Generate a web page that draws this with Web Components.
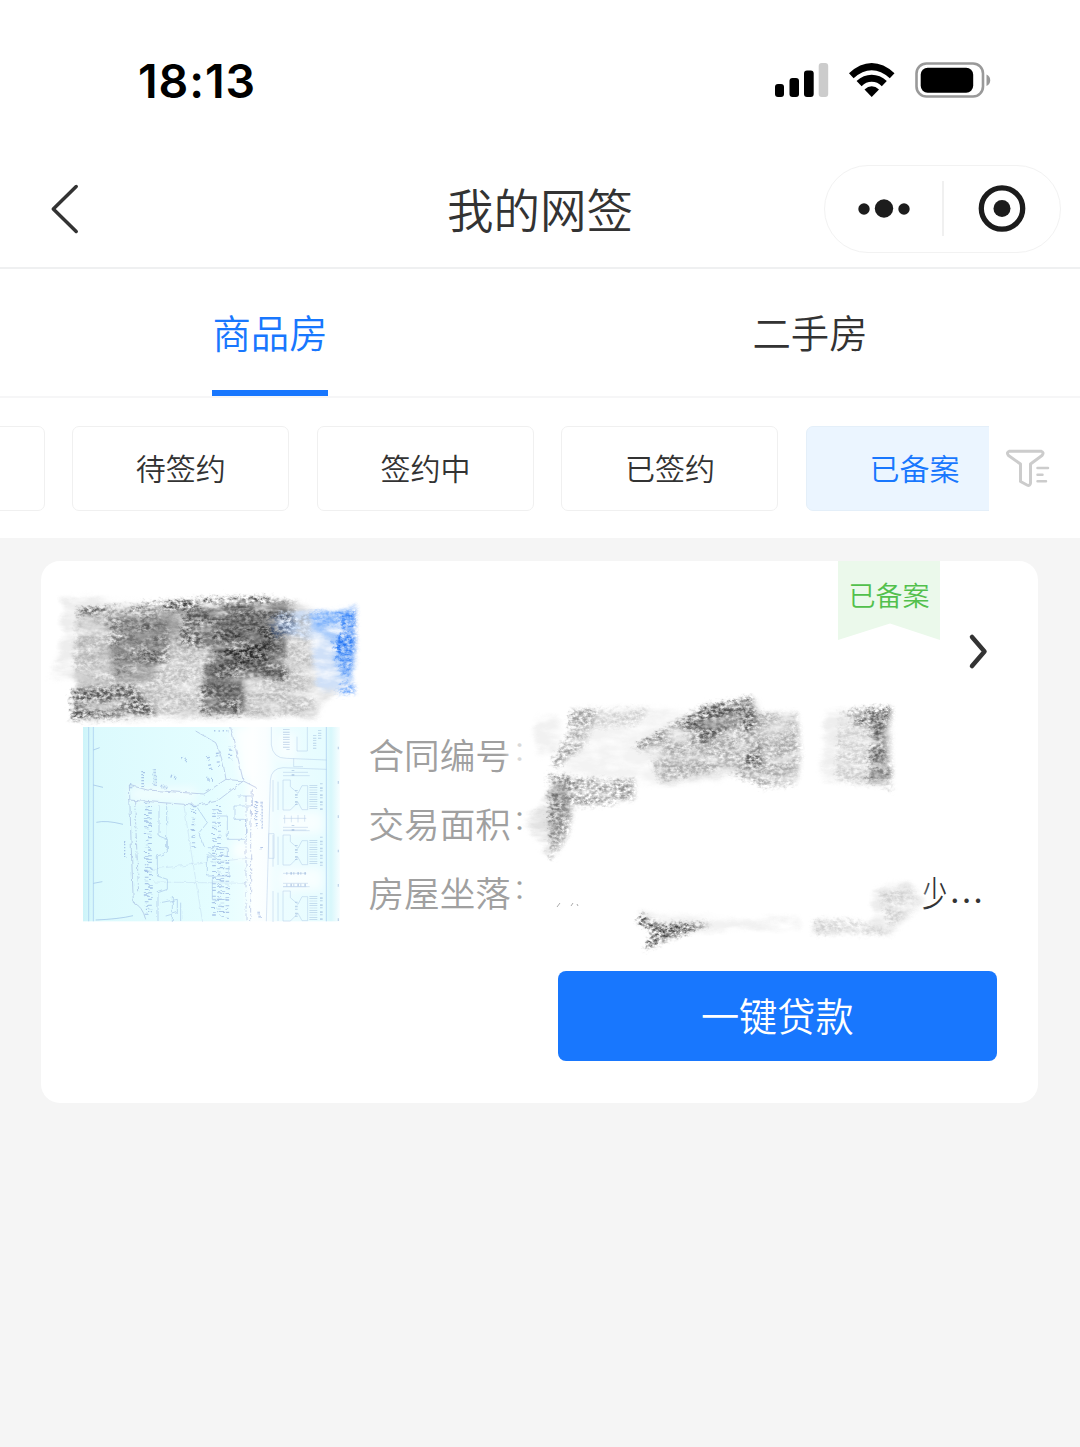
<!DOCTYPE html>
<html lang="zh-CN">
<head>
<meta charset="utf-8">
<title>我的网签</title>
<style>
    html, body { margin: 0; background: #f5f5f5; }
    body {
        width: 1080px;
        height: 1447px;
        overflow: hidden;
        font-family: "Noto Sans CJK SC", sans-serif;
        font-weight: 350;
        color: #333;
        --blue: #1877fe;
        --line: #eff0f1;
    }
</style>
</head>
<body>

<status-bar>18:13</status-bar>
<nav-bar>我的网签</nav-bar>
<tab-bar>
    <tab-item active>商品房</tab-item>
    <tab-item>二手房</tab-item>
</tab-bar>
<filter-bar>
    <filter-chip></filter-chip>
    <filter-chip>待签约</filter-chip>
    <filter-chip>签约中</filter-chip>
    <filter-chip>已签约</filter-chip>
    <filter-chip active>已备案</filter-chip>
</filter-bar>
<contract-card>
    <status-ribbon slot="status">已备案</status-ribbon>
    <plan-picture slot="picture"></plan-picture>
    <info-row>合同编号</info-row>
    <info-row>交易面积</info-row>
    <info-row>房屋坐落<span slot="value">少</span><span slot="more">...</span></info-row>
    <action-button slot="action">一键贷款</action-button>
    <chalk-marks slot="marks"></chalk-marks>
</contract-card>

<script>
const define = function (name, html) {
    const template = document.createElement('template');
    template.innerHTML = html;

    customElements.define(name, class extends HTMLElement {
        constructor () {
            super();
            this.attachShadow({ mode: 'open' });
            this.shadowRoot.appendChild(template.content.cloneNode(true));
        }
    });
};


define('status-bar', `
    <style>
        :host {
            display: flex;
            justify-content: space-between;
            align-items: center;
            box-sizing: border-box;
            height: 150px;
            padding: 10px 88px 0 138px;
            background: white;
            color: black;
        }
        .time { font: 600 46.500px/1 Inter, sans-serif; letter-spacing: .900px; margin-bottom: -2px; }
        svg { display: block; }
    </style>
    <div class="time"><slot></slot></div>
    <svg width="220" height="44" viewBox="772 58 220 44">
        <rect x="775" y="84" width="9" height="13" rx="3"/>
        <rect x="789.5" y="78" width="9.5" height="19" rx="3"/>
        <rect x="804" y="70.5" width="9.7" height="26.5" rx="3"/>
        <rect x="818.7" y="63" width="9.5" height="34" rx="3" fill="#ccc"/>
        <path d="M849 73.200Q860 63 871.700 63Q883.500 63 894.500 73.200L889.800 78.200Q881 70.200 871.700 70.200Q862.400 70.200 853.600 78.200Z"/>
        <path d="M856.600 81Q863.500 74.700 871.700 74.700Q880 74.700 886.800 81L881.800 86.200Q877.500 81.800 871.700 81.800Q866 81.800 861.600 86.200Z"/>
        <path d="M864.500 89.500Q868 86.200 871.700 86.200Q875.500 86.200 879 89.500L871.700 97Z"/>
        <rect x="916.500" y="63.500" width="66.500" height="33" rx="10" fill="white" stroke="#999" stroke-width="2.600"/>
        <rect x="920.700" y="67.700" width="52.500" height="25" rx="7"/>
        <path d="M986.500 74.500Q990.200 76 990.200 80.200Q990.200 84.400 986.500 86Z" fill="#999"/>
    </svg>
`);


define('nav-bar', `
    <style>
        :host {
            display: grid;
            grid-template-columns: 256px 1fr 237px;
            align-items: center;
            box-sizing: border-box;
            height: 119px;
            padding: 0 19px 0 20px;
            background: white;
            border-bottom: 2px solid var(--line);
        }
        .title { text-align: center; font-size: 46.5px; line-height: 1; margin: 0 0 0 -20px; }
        .capsule {
            display: grid;
            grid-template-columns: 1fr 2px 1fr;
            align-items: center;
            justify-items: center;
            box-sizing: border-box;
            height: 88px;
            border: 1px solid #f2f2f2;
            border-radius: 44px;
        }
        .divider { width: 2px; height: 55px; background: #f0f0f0; }
        svg { display: block; }
    </style>
    <svg width="60" height="60" viewBox="20 179 60 60" fill="none" stroke="#333" stroke-width="3.500" stroke-linecap="round" stroke-linejoin="round">
        <path d="M76.200 186.500L53.300 209L76.200 231.500"/>
    </svg>
    <div class="title"><slot></slot></div>
    <div class="capsule">
        <svg width="56" height="24" viewBox="-1 .500 56 24" fill="#1c1c1c">
            <circle cx="8" cy="12.500" r="5.700"/>
            <circle cx="28" cy="12" r="9.200"/>
            <circle cx="48" cy="12.500" r="5.700"/>
        </svg>
        <div class="divider"></div>
        <svg width="50" height="50" viewBox="0 .500 50 50">
            <circle cx="25" cy="25" r="20.700" fill="none" stroke="#1c1c1c" stroke-width="5.300"/>
            <circle cx="25" cy="25" r="8.500" fill="#1c1c1c"/>
        </svg>
    </div>
`);


define('tab-bar', `
    <style>
        :host {
            display: grid;
            grid-template-columns: 1fr 1fr;
            box-sizing: border-box;
            height: 129px;
            background: white;
            border-bottom: 2px solid #f6f6f7;
        }
    </style>
    <slot></slot>
`);


define('tab-item', `
    <style>
        :host { display: flex; justify-content: center; }
        div {
            box-sizing: border-box;
            height: 127px;
            font-size: 38.4px;
            line-height: 125px;
            border-bottom: 6px solid transparent;
        }
        :host([active]) div { color: var(--blue); border-color: var(--blue); }
    </style>
    <div><slot></slot></div>
`);


define('filter-bar', `
    <style>
        :host {
            display: grid;
            grid-template-columns: 989px 1fr;
            align-items: center;
            height: 140px;
            background: white;
        }
        .scroller { display: flex; gap: 27.600px; overflow: hidden; }
        /* scrolled so that the last chip is nearly in view */
        ::slotted(:first-child) { margin-left: -172.300px; }
        svg { display: block; margin-left: 16px; }
    </style>
    <div class="scroller"><slot></slot></div>
    <svg width="46" height="42" viewBox="1005 447 46 42" fill="none" stroke="#ccc" stroke-width="3" stroke-linecap="round" stroke-linejoin="round">
        <path d="M1009.500 451.200H1041Q1044.500 452.500 1042 455.500L1030.500 464V483Q1030 486.500 1027 485L1020.500 481.500V464L1008.500 455.500Q1006 452.500 1009.500 451.200Z"/>
        <path d="M1037.500 468H1048M1037.500 474.700H1042.500M1037.500 481.300H1046" stroke-width="2.500"/>
    </svg>
`);


define('filter-chip', `
    <style>
        :host {
            display: block;
            flex: none;
            box-sizing: border-box;
            width: 217px;
            height: 85px;
            border: 1px solid #f0f0f0;
            border-radius: 7px;
            text-align: center;
            font-size: 30px;
            line-height: 81px;
        }
        :host([active]) { color: var(--blue); background: #ebf5ff; border-color: #e4eff9; }
    </style>
    <slot></slot>
`);


define('contract-card', `
    <style>
        :host {
            display: block;
            position: relative;
            box-sizing: border-box;
            width: 997px;
            height: 542px;
            margin: 23px 0 0 41px;
            padding: 0 41px 0 42px;
            background: white;
            border-radius: 19px;
        }
        .head { display: flex; justify-content: flex-end; gap: 28px; height: 166px; }
        .head svg { display: block; margin: 72px 9px 0 0; }
        .body { display: grid; grid-template-columns: 257px 1fr; gap: 28.500px; height: 194.500px; }
        .rows { margin-top: -8px; }
        .foot { display: flex; justify-content: flex-end; padding-top: 49px; }
        ::slotted(chalk-marks) { position: absolute; inset: 0; pointer-events: none; }
    </style>
    <div class="head">
        <slot name="status"></slot>
        <svg width="20" height="38" viewBox="968 633 20 38" fill="none" stroke="#333" stroke-width="4.500" stroke-linecap="round" stroke-linejoin="round">
            <path d="M972 637L984.500 651.500L972 666"/>
        </svg>
    </div>
    <div class="body">
        <slot name="picture"></slot>
        <div class="rows"><slot></slot></div>
    </div>
    <div class="foot"><slot name="action"></slot></div>
    <slot name="marks"></slot>
`);


define('status-ribbon', `
    <style>
        :host {
            display: block;
            width: 102px;
            height: 79px;
            background: #ebf9eb;
            color: #52c04c;
            clip-path: polygon(0 0, 100% 0, 100% 100%, 51% 79%, 0 100%);
            font-size: 27px;
            line-height: 68px;
            text-align: center;
        }
    </style>
    <slot></slot>
`);


define('info-row', `
    <style>
        :host { display: flex; height: 69px; line-height: 69px; font-size: 35.600px; color: #a0a0a0; }
        .colon { font-size: 27px; margin: -4px 0 0 2px; }
        .value { margin-left: auto; color: #333; display: flex; }
        ::slotted([slot=value]) { display: block; transform: scaleX(.7); margin-right: -3px; }
        ::slotted([slot=more]) { display: block; letter-spacing: 2.100px; margin: -4px 12px 0 0; }
    </style>
    <div><slot></slot></div>
    <div class="colon">：</div>
    <div class="value"><slot name="value"></slot><slot name="more"></slot></div>
`);


define('action-button', `
    <style>
        :host {
            display: block;
            width: 439.500px;
            height: 90.500px;
            border-radius: 8px;
            background: var(--blue);
            color: white;
            font-size: 38.200px;
            line-height: 87px;
            text-align: center;
        }
    </style>
    <slot></slot>
`);


// site plan thumbnail, drawn at 3x
define('plan-picture', `
    <style>
        :host { display: block; }
        svg { display: block; }
    </style>
    <svg width="257" height="195" viewBox="40 36 771 585" fill="none">
        <defs>
            <linearGradient id="wash">
                <stop offset="0" stop-color="#cdf4f9"/>
                <stop offset=".05" stop-color="#dcfafd"/>
                <stop offset=".5" stop-color="#e4fdff"/>
                <stop offset=".62" stop-color="#ecfeff"/>
                <stop offset=".66" stop-color="#fcffff"/>
                <stop offset=".71" stop-color="#fafeff"/>
                <stop offset=".76" stop-color="#edfdff"/>
                <stop offset=".94" stop-color="#e6fcff"/>
                <stop offset=".965" stop-color="#d8f7fb"/>
                <stop offset="1" stop-color="#f8feff"/>
            </linearGradient>
            <filter id="soft"><feGaussianBlur stdDeviation="14"/></filter>
            <filter id="rough" x="0" y="0" width="100%" height="100%">
                <feTurbulence type="fractalNoise" baseFrequency=".06" numOctaves="2" seed="4"/>
                <feDisplacementMap in="SourceGraphic" scale="12"/>
            </filter>
        </defs>
        <rect x="40" y="34" width="771" height="585" fill="url(#wash)"/>
        <g filter="url(#soft)" fill="#fff">
            <path d="M490 34H555V190L515 190Z" opacity=".8"/>
            <rect x="620" y="55" width="60" height="80" opacity=".6"/>
            <rect x="630" y="290" width="130" height="65" opacity=".7"/>
            <rect x="630" y="460" width="130" height="65" opacity=".7"/>
            <rect x="490" y="380" width="50" height="50" opacity=".8"/>
            <rect x="180" y="215" width="200" height="45" opacity=".5"/>
        </g>
        <g stroke="#83a9dd" stroke-width="2" opacity=".75">
            <path d="M57 34V619M71 34V619M770 34V619" stroke="#91b9e8"/>
            <path d="M71 105L90 98M71 210L100 217M71 505L98 500M80 322Q110 315 160 328M78 615Q150 612 190 602"/>
        </g>
        <g stroke="#8393cf" stroke-width="1.800" opacity=".7" transform="translate(3 3)" filter="url(#rough)">
            <path d="M176 207L230 222L400 234L466 190L518 195L557 215"/>
            <path d="M174 252L380 268L440 255L518 195L480 34M466 190Q455 120 435 80L375 45"/>
            <path d="M176 207L182 400L188 560Q215 570 225 610" />
            <path d="M192 255L204 530M545 220L540 350V619M526 240V610" stroke-dasharray="18 5 4 5"/>
            <path d="M340 270L362 410L396 619M240 460L545 425M250 498L540 502" opacity=".4"/>
        </g>
        <g stroke="#6f8fd2" opacity=".5" transform="translate(3 3)" filter="url(#rough)">
            <path d="M228 260V600M238 270V590M368 268V395M430 280V610M445 270V600M470 420V610M455 400V600" stroke-width="11" stroke-dasharray="3 9 2 5 4 14"/>
            <path d="M265 268V360L290 370V410L260 420V480L290 490V520L262 530V615M288 262V400M380 275L410 320L385 350L400 390M410 395H470V420H410V480H475V450M425 490V550H470M500 240H545V270H490V310H525V370H470V300H440M415 410L440 430M270 560L320 550V590L285 600M305 540V619M330 560V615" stroke-width="2"/>
            <path d="M216 165V215M252 160V210M160 375V425M556 255V340M576 260V340M570 390V400M567 590V605M181 205V218M270 210L290 216" stroke-width="8" stroke-dasharray="3 2 1 3"/>
            <path d="M430 42H480M410 120L420 160M440 110L445 160M480 90V130M335 125L350 135M300 180L315 185M410 190H430" stroke-width="9" stroke-dasharray="4 7 3 12"/>
        </g>
        <g stroke="#88a9d8" stroke-width="1.600" opacity=".55">
            <path d="M605 34V90Q610 130 650 130L770 135M590 619L602 195Q605 160 640 158L770 163M713 34V108H682V65M672 130V155H700"/>
            <path id="block" d="M640 195H662V215L685 235L697 212H714V284H697L685 262L662 285H640ZM610 195V290M625 200V285M640 172H715M640 182H720"/>
            <use href="#block" y="165"/>
            <use href="#block" y="333"/>
            <path d="M597 356H613V430H597ZM645 300V325M665 302V322M685 300V322M705 300V320M640 310H710M640 345H710M640 475H710M640 515H710"/>
        </g>
        <g stroke="#7e9fce" opacity=".42">
            <path d="M655 42V105M645 42V102M735 60V105M750 45V75" stroke-width="10" stroke-dasharray="2 6 3 4"/>
            <path d="M725 210V285M737 210V285M725 375V452M737 375V452M725 543V615M737 543V615" stroke-width="12" stroke-dasharray="2 5"/>
            <path d="M755 205V285M755 365V452M755 535V615M680 225V275M670 165V185M680 390V440M670 330V350M650 475H710M650 510H710M680 560V605" stroke-width="8" stroke-dasharray="3 9 5 4"/>
            <path d="M806 95V619" stroke-width="4" stroke-dasharray="8 95"/>
        </g>
    </svg>
`);


// chalk scribbles over the private values
define('chalk-marks', `
    <style>
        :host { display: block; }
        svg { display: block; width: 997px; height: 542px; }
    </style>
    <svg viewBox="41 561 997 542" preserveAspectRatio="none">
        <defs>
            <filter id="grain" filterUnits="userSpaceOnUse" x="41" y="561" width="997" height="542" color-interpolation-filters="sRGB">
                <feTurbulence type="fractalNoise" baseFrequency=".24 .34" numOctaves="3" seed="8" result="noise"/>
                <feTurbulence type="fractalNoise" baseFrequency=".03 .08" numOctaves="3" seed="21" result="patches"/>
                <feGaussianBlur in="SourceGraphic" stdDeviation="2" result="blur"/>
                <feDisplacementMap in="blur" in2="noise" scale="9" xChannelSelector="R" yChannelSelector="G" result="edge"/>
                <feColorMatrix in="noise" values="0 0 0 0 0  0 0 0 0 0  0 0 0 0 0  2.400 0 0 0 -.650" result="mask"/>
                <feColorMatrix in="patches" values="0 0 0 0 0  0 0 0 0 0  0 0 0 0 0  2.600 0 0 0 -.450" result="mask2"/>
                <feComposite in="edge" in2="mask" operator="in" result="grained"/>
                <feComposite in="grained" in2="mask2" operator="in"/>
            </filter>
            <filter id="smear" filterUnits="userSpaceOnUse" x="41" y="561" width="997" height="542" color-interpolation-filters="sRGB">
                <feTurbulence type="fractalNoise" baseFrequency=".04 .1" numOctaves="4" seed="3" result="noise"/>
                <feGaussianBlur in="SourceGraphic" stdDeviation="2.500" result="blur"/>
                <feDisplacementMap in="blur" in2="noise" scale="10" xChannelSelector="R" yChannelSelector="G" result="edge"/>
                <feColorMatrix in="noise" values="0 0 0 0 0  0 0 0 0 0  0 0 0 0 0  2 0 0 0 -.200" result="mask"/>
                <feComposite in="edge" in2="mask" operator="in"/>
            </filter>
            <filter id="fade" x="-30%" y="-30%" width="160%" height="160%"><feGaussianBlur stdDeviation="3"/></filter>
        </defs>

        <g filter="url(#fade)" fill="#fff">
            <ellipse cx="522" cy="755" rx="15" ry="26" opacity=".6"/>
            <path d="M912 870H922L925 880L920 908H910Z"/>
        </g>

        <g filter="url(#smear)">
            <path d="M62 598L100 597L160 612L150 690L50 678L62 650Z" fill="#ededed"/>
            <path d="M78 612L296 602L318 612V716L74 718Z" fill="#d4d4d4"/>
            <path d="M108 620L165 610V665L150 680H115Z" fill="#a0a0a0"/>
            <path d="M165 612L205 606V640H165Z" fill="#aaa"/>
            <path d="M204 606L290 602L284 678H244V712H205Z" fill="#8b8b8b"/>
            <path d="M162 650H205V714H150V690Z" fill="#e4e4e4"/>
            <path d="M288 634L335 640L345 685L315 712H250V682H282Z" fill="#e2e2e2"/>
            <path d="M276 614L320 610L352 615V690L318 690L310 640L278 630Z" fill="#cfe0f8"/>
            <path d="M310 614L354 608L354 680H340L332 640L312 630Z" fill="#a8cbfb"/>
            <path d="M573 712L650 708L700 712V785L650 785L560 772Z" fill="#f3f3f3"/>
            <path d="M645 745L705 708L755 700L760 712L796 714L798 782L735 775L665 785Z" fill="#e4e4e4"/>
            <path d="M690 722L745 702L752 715L706 742Z" fill="#b4b4b4"/>
            <path d="M825 712H888V786L822 778Z" fill="#eee"/>
            <path d="M872 715H888V784H872Z" fill="#bbb"/>
            <path d="M526 822L550 788H565L563 840L547 856Z" fill="#e2e2e2"/>
            <path d="M551 782L570 782V815L551 840Z" fill="#c4c4c4"/>
            <path d="M640 912L720 920L800 918V930L700 930L660 934Z" fill="#f1f1f1"/>
            <path d="M815 920L870 923L875 888L910 882L926 902L890 934L815 934Z" fill="#ececec"/>
            <path d="M535 718H560V752L538 757Z" fill="#f1f1f1"/>
        </g>

        <g filter="url(#grain)">
            <path d="M78 610L268 599L298 604L294 622L310 612L316 714L74 720L80 686L74 660Z" fill="#888" opacity=".45"/>
            <path d="M78 609L135 605L180 600L268 597V605L180 609L80 614Z" fill="#444"/>
            <path d="M186 608L268 598L298 603L284 640L290 680H205L215 650L180 643Z" fill="#444" opacity=".8"/>
            <path d="M212 628H274V658L218 668Z" fill="#222" opacity=".8"/>
            <path d="M202 683H244V714H202Z" fill="#444" opacity=".8"/>
            <path d="M108 618H170V670L118 676Z" fill="#555" opacity=".6"/>
            <path d="M142 610H160V664H146Z" fill="#444" opacity=".6"/>
            <path d="M72 690L135 685L158 714L72 721Z" fill="#444" opacity=".8"/>
            <path d="M338 610L356 606V650L350 675L340 670L334 640L344 630Z" fill="#2a79f4"/>
            <path d="M342 684H355V694H338Z" fill="#4c92fb"/>
            <path d="M310 612L352 609V622L320 630Z" fill="#5e9efb" opacity=".6"/>
            <path d="M268 618L296 616V634L275 638Z" fill="#4c6286" opacity=".8"/>

            <path d="M572 709L600 709L585 745L558 768L552 765L568 735Z" fill="#777" opacity=".7"/>
            <path d="M585 710L650 708L640 724L580 730Z" fill="#aaa" opacity=".5"/>
            <path d="M634 747L704 706L752 697L757 713L798 713L802 755L796 784L765 788L725 770L660 782L650 755Z" fill="#888" opacity=".65"/>
            <path d="M634 747L704 706L708 716L640 750Z" fill="#777" opacity=".8"/>
            <path d="M682 722L706 706L752 697L755 710L705 744L688 736Z" fill="#444" opacity=".8"/>
            <path d="M742 712L756 710L764 764L748 768Z" fill="#444" opacity=".75"/>
            <path d="M840 712L892 708V788L835 780Z" fill="#aaa" opacity=".5"/>
            <path d="M850 710L892 707V717L886 724V758L892 762V790L868 780L874 727H850Z" fill="#3a3a3a" opacity=".7"/>
            <path d="M549 774L575 779L635 780V800L575 808L568 835L554 858H550Z" fill="#777" opacity=".8"/>
            <path d="M550 776H572V800L550 825Z" fill="#666" opacity=".6"/>
            <path d="M642 914L660 924L712 924L682 934L645 949L654 932L638 922Z" fill="#444"/>
            <path d="M815 920H855L880 928L895 934H815Z" fill="#bbb" opacity=".6"/>
            <path d="M880 892L908 887L922 902L890 928Z" fill="#bbb" opacity=".6"/>
        </g>
        <path d="M557 907L560 903M571 906L573 903M577 904L578 906" stroke="#aaa"/>
    </svg>
`);
</script>
</body>
</html>
